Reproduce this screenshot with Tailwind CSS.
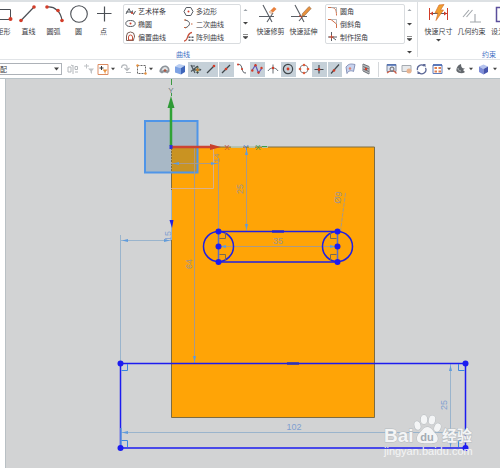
<!DOCTYPE html>
<html lang="zh-CN">
<head>
<meta charset="utf-8">
<meta name="viewport" content="width=device-width, initial-scale=1">
<title>草图</title>
<script src="https://cdn.jsdelivr.net/npm/@tailwindcss/browser@4"></script>
</head>
<body class="flex min-h-screen flex-col overflow-hidden bg-white font-['Noto_Sans_CJK_SC','Liberation_Sans',sans-serif] text-[7px] leading-[10px] text-[#3c3c44]">

<!-- Ribbon -->
<header class="flex h-[59px] w-full shrink-0 overflow-hidden border-t-2 border-[#dde1e4] whitespace-nowrap">
  <section aria-label="曲线" class="relative flex shrink-0 pt-0.5">
    <div class="-ml-[9px] flex">
      <button class="flex w-[25px] flex-col items-center"><svg class="h-[22px] w-[25px]" viewBox="0 0 25 22" fill="none"><path d="M2 5.500h17.500v10H2z" stroke="#4b4f55"/><circle cx="19.500" cy="15" r="2" fill="#d23c28"/></svg>矩形</button>
      <button class="flex w-[25px] flex-col items-center"><svg class="h-[22px] w-[25px]" viewBox="0 0 25 22" fill="none"><path d="M5 16.500 18 3" stroke="#4b4f55" stroke-width="1.200"/><circle cx="5" cy="16.500" r="1.800" fill="#d23c28"/><circle cx="18" cy="3" r="1.800" fill="#d23c28"/></svg>直线</button>
      <button class="flex w-[25px] flex-col items-center"><svg class="h-[22px] w-[25px]" viewBox="0 0 25 22" fill="none"><path d="M6 3C14 2 20 8 21 16.500" stroke="#4b4f55" stroke-width="1.200"/><circle cx="6" cy="3" r="1.800" fill="#d23c28"/><circle cx="17" cy="6.500" r="1.800" fill="#d23c28"/><circle cx="21" cy="16.500" r="1.800" fill="#d23c28"/></svg>圆弧</button>
      <button class="flex w-[25px] flex-col items-center"><svg class="h-[22px] w-[25px]" viewBox="0 0 25 22" fill="none"><circle cx="13" cy="10" r="8.300" stroke="#4b4f55" stroke-width="1.100"/></svg>圆</button>
      <button class="flex w-[25px] flex-col items-center"><svg class="h-[22px] w-[25px]" viewBox="0 0 25 22" fill="none"><path d="M13.500 2.500v15M6 9.500h14.500" stroke="#4b4f55" stroke-width="1.200"/></svg>点</button>
    </div>
    <div class="ml-[7px] flex h-10 rounded-xs border border-[#d9dcdf]">
      <div class="grid w-[116px] grid-cols-2 content-around">
        <button class="flex items-center gap-0.5 pl-px"><svg class="size-[11px]" viewBox="0 0 11 11" fill="none"><path d="M1 8 4 2.500 6 7 7.500 4.500M1 6h4M7 5l1.500 3.500L10.500 5" stroke="#555a61"/><circle cx="7" cy="7" r="1" fill="#d23c28"/></svg>艺术样条</button>
        <button class="flex items-center gap-0.5 pl-px"><svg class="size-[11px]" viewBox="0 0 11 11" fill="none"><path d="M3.200 1.500h4.600L10 5.500l-2.200 4H3.200L1 5.500z" stroke="#555a61"/><circle cx="5.500" cy="5.500" r="1" fill="#d23c28"/></svg>多边形</button>
        <button class="flex items-center gap-0.5 pl-px"><svg class="size-[11px]" viewBox="0 0 11 11" fill="none"><ellipse cx="5.500" cy="5.500" rx="4.700" ry="3" stroke="#555a61"/><circle cx="5.500" cy="5.500" r="1" fill="#d23c28"/></svg>椭圆</button>
        <button class="flex items-center gap-0.5 pl-px"><svg class="size-[11px]" viewBox="0 0 11 11" fill="none"><path d="M2 2c6 1 6 6 0 8" stroke="#555a61"/><path d="M1 2h2M1 9.500h2M8 6h1.500" stroke="#c8643c"/></svg>二次曲线</button>
        <button class="flex items-center gap-0.5 pl-px"><svg class="size-[11px]" viewBox="0 0 11 11" fill="none"><path d="M1.500 9.500V5a4 4 0 0 1 8 0c0 2-1 2-1 4.500z" stroke="#7b6058"/><path d="M3.500 9V6a2 2 0 0 1 4 0v3z" stroke="#c8503a"/></svg>偏置曲线</button>
        <button class="flex items-center gap-0.5 pl-px"><svg class="size-[11px]" viewBox="0 0 11 11" fill="none"><path d="M1 10c5 0 2-8 8-8.500" stroke="#c8503a" stroke-width="1.300"/><path d="M5.500 5.500h2v1.500h-2zM8.500 5.500h2v1.500h-2zM5.500 8.500h2V10h-2zM8.500 8.500h2V10h-2z" fill="#555a61"/></svg>阵列曲线</button>
      </div>
    </div>
    <div class="flex h-10 w-[8px] flex-col items-center justify-around">
      <button aria-label="向上滚动"><svg class="h-1 w-[5px]" viewBox="0 0 5 4"><path d="M.5 3 2.500 1l2 2z" fill="#9aa0a6"/></svg></button>
      <button aria-label="向下滚动"><svg class="h-1 w-[5px]" viewBox="0 0 5 4"><path d="M0 1h5L2.500 3.500z" fill="#444"/></svg></button>
      <button aria-label="更多曲线"><svg class="h-1.5 w-[5px]" viewBox="0 0 5 6"><path d="M0 .5h5M0 2.500h5L2.500 5z" fill="#444" stroke="#444" stroke-width=".6"/></svg></button>
    </div>
    <div class="ml-[5px] flex">
      <button class="flex w-[33px] flex-col items-center"><svg class="h-[22px] w-[25px]" viewBox="0 0 25 22" fill="none"><path d="M5 1 14 18M1 12.500h15M9 18 15 9" stroke="#5a5f66" stroke-width="1.100"/><path d="m11 8 5-5 2.500 2-5 5z" fill="#e8803c"/><path d="m11 8 1.500-1.500L15 8.500 13.500 10z" fill="#e6c9b6"/></svg>快速修剪</button>
      <button class="flex w-[33px] flex-col items-center"><svg class="h-[22px] w-[25px]" viewBox="0 0 25 22" fill="none"><path d="M4 1 13 18M0 12.500h16M8 17 13 11" stroke="#5a5f66" stroke-width="1.100"/><path d="m11.500 9.500 6.500-7 2.200 2-6.500 7-3 1z" fill="#e8913c" stroke="#8f6a4c" stroke-width=".6"/><path d="m8 11.500 3 2" stroke="#d23c28"/></svg>快速延伸</button>
    </div>
    <div class="ml-[5px] h-10 w-[80px] rounded-xs border border-[#d9dcdf]">
      <div class="grid h-full content-around">
        <button class="flex items-center gap-0.5 pl-px"><svg class="size-[11px]" viewBox="0 0 11 11" fill="none"><path d="M1 1.500h3c4 0 5.500 2 5.500 8" stroke="#d0704a"/><path d="M4 1.500h5.500V6" stroke="#a5a9ad" stroke-width=".8"/></svg>圆角</button>
        <button class="flex items-center gap-0.5 pl-px"><svg class="size-[11px]" viewBox="0 0 11 11" fill="none"><path d="M1 1.500h3L9.500 6v4" stroke="#d0704a"/><path d="M4 1.500h5.500V6" stroke="#a5a9ad" stroke-width=".8"/></svg>倒斜角</button>
        <button class="flex items-center gap-0.5 pl-px"><svg class="size-[11px]" viewBox="0 0 11 11" fill="none"><path d="M4.500 1v9M1 6h9M5 6l4 3" stroke="#5a5f66"/><path d="M2 6h5M4.500 4v4" stroke="#c8503a"/></svg>制作拐角</button>
      </div>
    </div>
    <div class="flex h-[52px] w-[9px] flex-col items-center pt-1">
      <button aria-label="向上滚动" class="flex h-[14px] items-start"><svg class="h-1 w-[5px]" viewBox="0 0 5 4"><path d="M.5 3 2.500 1l2 2z" fill="#9aa0a6"/></svg></button>
      <button aria-label="向下滚动" class="flex h-[14px] items-start"><svg class="h-1 w-[5px]" viewBox="0 0 5 4"><path d="M0 1h5L2.500 3.500z" fill="#444"/></svg></button>
      <button aria-label="更多编辑" class="flex h-[14px] items-start"><svg class="h-1.5 w-[5px]" viewBox="0 0 5 6"><path d="M0 .5h5M0 2.500h5L2.500 5z" fill="#444" stroke="#444" stroke-width=".6"/></svg></button>
      <button aria-label="曲线组选项"><svg class="h-1 w-[5px]" viewBox="0 0 5 4"><path d="M0 1h5L2.500 3.500z" fill="#444"/></svg></button>
    </div>
    <h2 class="absolute bottom-0 left-[176px] text-[#4472c4]">曲线</h2>
  </section>
  <section aria-label="约束" class="relative mb-0.5 ml-[3px] flex shrink-0 border-l border-[#dcdfe2] pt-0.5">
    <button class="ml-1 flex w-[33px] flex-col items-center"><svg class="h-[22px] w-[25px]" viewBox="0 0 25 22" fill="none"><path d="M3.500 4v12M21.500 4v12" stroke="#d23c28"/><path d="M4 9.500h17" stroke="#555a61"/><path d="m4 9.500 3-2v4zM21 9.500l-3-2v4z" fill="#d23c28"/><path d="m13 1 5-.500-3.500 5.500h3L10 16.500l2-7.500H9z" fill="#f0a030" stroke="#d8702c" stroke-width=".7"/></svg>快速尺寸<svg class="mt-0.5 h-1 w-[5px]" viewBox="0 0 5 4"><path d="M0 1h5L2.500 3.500z" fill="#444"/></svg></button>
    <button class="flex w-[33px] flex-col items-center"><svg class="h-[22px] w-[25px]" viewBox="0 0 25 22" fill="none"><path d="m4 13 6-7M7.500 13l6-7M16 10v8M11 18h11" stroke="#a0a5aa" stroke-width="1.100"/></svg>几何约束</button>
    <button class="flex w-[33px] flex-col items-start pl-[3px]"><svg class="h-[22px] w-[25px]" viewBox="0 0 25 22" fill="none"><path d="M5.500 3.500h12v14h-12z" stroke="#5b4f9c" stroke-width="1.500"/><path d="M9 2h5v3H9z" fill="#8a8fa0"/></svg>设为对称</button>
    <h2 class="absolute -bottom-0.5 left-[64px] text-[#4472c4]">约束</h2>
  </section>
</header>

<!-- Selection bar -->
<nav aria-label="选择条" class="flex h-5 w-full shrink-0 items-center overflow-hidden border-y border-t-[#e1e4e7] border-b-[#b9c3c8]">
  <div class="relative shrink-0">
    <label for="scope" class="sr-only">选择范围</label>
    <select id="scope" class="h-3 w-[62px] appearance-none border border-l-0 border-[#adb2b8] bg-white pr-3 leading-[10px]"><option>配</option></select>
    <svg class="pointer-events-none absolute top-1 right-[3px] h-1 w-[5px]" viewBox="0 0 5 4"><path d="M0 .5h5L2.500 3.500z" fill="#444"/></svg>
  </div>
  <div class="ml-[3px] flex shrink-0 items-center">
    <button aria-label="类型" class="flex w-4 justify-center"><svg class="size-3" viewBox="0 0 12 12" fill="none" stroke="#b4b8bc"><path d="M1 4h3v5H1zM6 2v9M8 3.500h2.500v3H8zM8 9h3M4 2l2 1"/></svg></button>
    <button aria-label="过滤" class="flex w-4 justify-center"><svg class="size-3" viewBox="0 0 12 12"><path d="M1 3h5M3.500 1v4.500" stroke="#c0c3c6"/><path d="M5 5.500h6L9 8v3L7.500 9.500V8z" fill="#c0c3c6"/></svg></button>
    <button aria-label="添加过滤" class="flex w-3 justify-center"><svg class="h-[11px] w-3" viewBox="0 0 12 11" fill="none"><path d="M1 .5h10v10H1z" stroke="#dc8c62"/><path d="M2.500 4h4M4.500 2v4" stroke="#333"/><path d="M5.500 5.500h5L8.500 8v2L7.500 9V8z" fill="#e8913c"/></svg></button>
    <button aria-label="过滤选项" class="flex w-2 justify-center"><svg class="h-1 w-1" viewBox="0 0 5 4"><path d="M0 .5h5L2.500 3.500z" fill="#444"/></svg></button>
    <button aria-label="重置" class="flex w-[18px] justify-center"><svg class="size-3" viewBox="0 0 12 12" fill="none" stroke="#b4b8bc" stroke-width="1.200"><path d="M1.500 5C1.500 1 7 1 7 4v3M4.500 5 7 7.500 9.500 5M6 9.500h5"/></svg></button>
    <button aria-label="矩形选择" class="flex w-3 justify-center"><svg class="h-[11px] w-[11px]" viewBox="0 0 11 11" fill="none"><path d="M1.500 1.500h8v8h-8z" stroke="#666" stroke-dasharray="2 1"/><circle cx="1.500" cy="1.500" r="1.200" fill="#e8913c"/><circle cx="9.500" cy="9.500" r="1.200" fill="#e8913c"/></svg></button>
    <button aria-label="选择方式" class="flex w-2 justify-center"><svg class="h-1 w-1" viewBox="0 0 5 4"><path d="M0 .5h5L2.500 3.500z" fill="#444"/></svg></button>
  </div>
  <div class="ml-0.5 grid h-[15px] w-[217px] shrink-0 grid-cols-14 *:flex *:items-center *:justify-center">
    <button aria-label="高亮"><svg class="h-[11px] w-[11px]" viewBox="0 0 11 11"><path d="M.5 8C0 5 3 1.500 6 1.500S11 4 10.500 7.500L8.500 9.500C7 8 4 8 3 9.500z" fill="#8d949b"/><path d="M2.500 7c.5-3 2-4 3.500-4s3 1 3 3.500C7 5.500 5 5.500 2.500 7z" fill="#dfe2e4"/><circle cx="6" cy="6.500" r="1.200" fill="#b0543c"/></svg></button>
    <button aria-label="实体"><svg class="size-3" viewBox="0 0 12 12"><path d="M1 3.500 5 1l6 1.500-4 2.500z" fill="#b8cdf2"/><path d="M1 3.500 7 5v6.500L1 9.500z" fill="#7ea3e4"/><path d="m7 5 4-2.500V9l-4 2.500z" fill="#3f66ba"/></svg></button>
    <button aria-label="捕捉点" aria-pressed="true" class="bg-[#c5d0d8]"><svg class="size-3" viewBox="0 0 12 12" fill="none"><path d="m1 2 4 8M1 8.500l6-5M1 3h4" stroke="#4d565c" stroke-width="1.200"/><path d="M7.500 2.500 9 4.500H6zM7.500 11 9 9H6zM3.500 6.800l2-1.500v3zM11.500 6.800l-2-1.500v3z" fill="#40474c"/><path d="M5.500 6.800h4M7.500 4.500V9" stroke="#4f7d34" stroke-width="1.500"/><circle cx="7.500" cy="6.800" r="1.500" fill="#c87a3c"/></svg></button>
    <button aria-label="端点" aria-pressed="true" class="mr-px bg-[#c5d0d8]"><svg class="size-3" viewBox="0 0 12 12" fill="none"><path d="m2 10 7-7" stroke="#40474c" stroke-width="1.200"/><circle cx="9" cy="3" r="1.300" fill="#d23c28"/></svg></button>
    <button aria-label="中点" aria-pressed="true" class="mr-px bg-[#c5d0d8]"><svg class="size-3" viewBox="0 0 12 12" fill="none"><path d="m2 10 8-8" stroke="#40474c" stroke-width="1.200"/><circle cx="6" cy="6" r="1.300" fill="#d23c28"/></svg></button>
    <button aria-label="控制点"><svg class="size-3" viewBox="0 0 12 12" fill="none"><path d="M2 1.500c6-1 2 9 8 8.500" stroke="#555a61"/><circle cx="2" cy="1.500" r="1" fill="#d23c28"/><circle cx="6" cy="6" r="1" fill="#d23c28"/></svg></button>
    <button aria-label="极点" aria-pressed="true" class="mr-px bg-[#c5d0d8]"><svg class="size-3" viewBox="0 0 12 12" fill="none"><path d="M1 7.500 4.500 2l3 8 3.500-5" stroke="#5f55ba" stroke-width="1.200"/><g fill="#d23c28"><circle cx="1.300" cy="7.500" r="1.200"/><circle cx="4.500" cy="2.200" r="1.200"/><circle cx="7.500" cy="9.500" r="1.200"/><circle cx="10.500" cy="5" r="1.200"/></g></svg></button>
    <button aria-label="交点"><svg class="size-3" viewBox="0 0 12 12" fill="none"><path d="M1 8c2-4 8-4 10 0M6 1.500v9" stroke="#666c72"/><circle cx="6" cy="5" r="1.200" fill="#d23c28"/></svg></button>
    <button aria-label="圆弧中心" aria-pressed="true" class="mr-px bg-[#c5d0d8]"><svg class="size-3" viewBox="0 0 12 12" fill="none"><circle cx="6" cy="6" r="4.600" stroke="#40474c" stroke-width="1.200"/><circle cx="6" cy="6" r="1.400" fill="#d23c28"/></svg></button>
    <button aria-label="象限点"><svg class="size-3" viewBox="0 0 12 12" fill="none"><circle cx="6" cy="6" r="4" stroke="#8a8f94"/><g fill="#dc6040"><circle cx="6" cy="2" r="1.300"/><circle cx="6" cy="10" r="1.300"/><circle cx="2" cy="6" r="1.300"/><circle cx="10" cy="6" r="1.300"/></g></svg></button>
    <button aria-label="现有点" aria-pressed="true" class="mr-px bg-[#c5d0d8]"><svg class="size-3" viewBox="0 0 12 12" fill="none"><path d="M6 2v8.500M1.500 6.500h9" stroke="#40474c" stroke-width="1.200"/><circle cx="6" cy="6.500" r="1.400" fill="#c03a2a"/></svg></button>
    <button aria-label="曲线上的点" aria-pressed="true" class="mr-px bg-[#c5d0d8]"><svg class="size-3" viewBox="0 0 12 12" fill="none"><path d="m2 10.500 8-9" stroke="#40474c" stroke-width="1.200"/><circle cx="5" cy="7.500" r="1.300" fill="#d23c28"/></svg></button>
    <button aria-label="面上的点"><svg class="size-3" viewBox="0 0 12 12" fill="none"><path d="M1 4c3-4 6-3 9-2.500l-1.500 7C6 7 3 8 2 10.500z" fill="#c8d3ee" stroke="#8592b8"/><circle cx="5" cy="5.500" r="1.200" fill="#dc8070"/></svg></button>
    <button aria-label="网格点"><svg class="size-3" viewBox="0 0 12 12" fill="none"><path d="m3 1 6 2.500V11L3 8zM5 2v7M7 3v7M3 3.500l6 2.500M3 6l6 2.500" stroke="#6b7076"/><circle cx="6" cy="6" r="1.200" fill="#d23c28"/></svg></button>
  </div>
  <div class="ml-1 flex h-[15px] shrink-0 items-center border-l border-[#d5d8db] pl-[5px]">
    <button aria-label="缩放窗口" class="flex w-[15px] justify-center"><svg class="h-3 w-[11px]" viewBox="0 0 11 12" fill="none"><path d="M1 1.500h9v7H1z" fill="#dfe5f2" stroke="#7e889a"/><path d="M1 2h9" stroke="#4a6cb4" stroke-width="1.500"/><circle cx="6" cy="6" r="2" stroke="#666"/><path d="m1 10 3-2M7.500 7.500l3 3" stroke="#d0604a" stroke-width="1.300"/></svg></button>
    <button aria-label="适合窗口" class="flex w-[15px] justify-center"><svg class="h-3 w-[11px]" viewBox="0 0 11 12" fill="none"><path d="M1 2.500h9v6H1z" fill="#e8eaec" stroke="#a5aab0"/><circle cx="8" cy="8" r="2.500" fill="#e8b490"/></svg></button>
    <button aria-label="旋转" class="flex w-[15px] justify-center"><svg class="h-3 w-[11px]" viewBox="0 0 11 12" fill="none"><path d="M1.500 7A4 4 0 0 1 8 3M9.500 5A4 4 0 0 1 3 9.500" stroke="#5b6796" stroke-width="1.300"/><path d="M6.500 1h3v3.500zM4.500 11H1.500V7.500z" fill="#5b6796"/></svg></button>
    <button aria-label="窗口布局" class="flex w-4 justify-center"><svg class="h-3 w-[11px]" viewBox="0 0 11 12" fill="none"><path d="M1 2h9v8.500H1z" fill="#fff" stroke="#5f7dbc"/><path d="M1 2h9" stroke="#3f62ae" stroke-width="1.500"/><path d="M2.500 4h2.500v2H2.500zM6.500 4H9v2H6.500zM2.500 7.500h2.500v2H2.500zM6.500 7.500H9v2H6.500z" fill="#e08050"/></svg></button>
    <button aria-label="布局选项" class="flex w-2 justify-center"><svg class="h-1 w-1" viewBox="0 0 5 4"><path d="M0 .5h5L2.500 3.500z" fill="#444"/></svg></button>
    <button aria-label="渲染样式" class="flex w-[14px] justify-center"><svg class="h-3 w-[11px]" viewBox="0 0 11 12"><path d="M6 1C3 2 1 5 1.500 8c2 2.500 6 3 8.500 1l-2-2 2-1.500C8 6 6 5 6 1z" fill="#62676c"/><path d="M3 5c0 2 1 3 3 3" fill="none" stroke="#b5babf"/></svg></button>
    <button aria-label="样式选项" class="flex w-2 justify-center"><svg class="h-1 w-1" viewBox="0 0 5 4"><path d="M0 .5h5L2.500 3.500z" fill="#444"/></svg></button>
    <button aria-label="视图方向" class="flex w-4 justify-center"><svg class="h-3 w-[11px]" viewBox="0 0 11 12"><path d="m1 3.500 4.500-2 4.500 2L5.500 6z" fill="#b5c3ee"/><path d="M1 3.500 5.500 6v5.500L1 9z" fill="#7c8cd8"/><path d="M10 3.500 5.500 6v5.500L10 9z" fill="#4655ac"/></svg></button>
    <button aria-label="方向选项" class="flex w-2 justify-center"><svg class="h-1 w-1" viewBox="0 0 5 4"><path d="M0 .5h5L2.500 3.500z" fill="#444"/></svg></button>
  </div>
</nav>

<!-- Sketch canvas -->
<main class="flex grow bg-[#d2d3d4]">
  <div class="w-[6px] shrink-0 border-r border-[#b9c0c4] bg-white"></div>
  <svg class="min-h-[389px] min-w-0 grow font-['Liberation_Sans_Narrow','Liberation_Sans',sans-serif] text-[9px]" role="img" aria-label="草图视图" fill="none">
    <g transform="translate(-6 -79)">
      <path d="M171.500 147h203v270.500h-203z" fill="#ffa406" stroke="#7d6c42"/>
      <path d="M145 121h52.500v51.500H145z" fill="#a8b8c6"/>
      <path d="M171.500 148h26v24.500h-26z" fill="#c99322"/>
      <path d="M171.500 148v25" stroke="#7d6c42" stroke-dasharray="2 1"/>
      <path d="M145 121h52.500v51.500H145z" stroke="#4f95e8" stroke-width="2"/>

      <!-- dimension and extension lines -->
      <g stroke="#aa9a86">
        <path d="M194.500 148v215M218.500 158v74M246.500 148v83M171 163.500h48M222 246.500h112"/>
        <path d="M345.500 193l-5 38" stroke-dasharray="4 1"/>
        <path d="M171 188.500h42.500V148" stroke="#d9b08c"/>
      </g>
      <g stroke="#9ab4cc">
        <path d="M120.500 235v128M121 240.500h50M121 432.500h345M450.500 364v84M171.500 190v50"/>
      </g>
      <g fill="#5f9bdc">
        <path d="m122 240.500 6-1.500v3zM170 240.500l-6-1.500v3zM122 432.500l6-1.500v3zM464 432.500l-6-1.500v3zM450.500 365l1.500 6h-3zM450.500 447l1.500-6h-3zM194.500 362l1.500-6h-3zM246.500 149l1.500 6h-3zM246.500 230l1.500-6h-3zM173 163.500l6-1.500v3zM217 163.500l-6-1.500v3zM220 246.500l6-1.500v3zM336 246.500l-6-1.500v3z"/>
      </g>

      <!-- coordinate system -->
      <path d="M171.500 79v6M171.500 93v3" stroke="#3c9a40"/>
      <path d="M171 146v-41" stroke="#2fa336" stroke-width="2.500"/>
      <path d="m171 96 3.500 12h-7z" fill="#2f9a36"/>
      <path d="M172 147h40" stroke="#cc4433" stroke-width="2.500"/>
      <path d="m221 147-11-3v6z" fill="#c8402c"/>
      <path d="M169.500 145h3v4h-3z" fill="#2a35d8"/>
      <path d="m169.500 220 4 0-1.500 8z" fill="#2020e0"/>
      <path d="M231 147h12M249 147h6M262 147h6" stroke="#b9cfc4" stroke-width="1.500"/>
      <path d="M262 146.500h5" stroke="#3aa048"/>
      <g text-anchor="middle" class="text-[8px]">
        <text x="171" y="93" fill="#6f7a80">Y</text>
        <text x="227" y="150" fill="#c8503c">X</text>
        <text x="246" y="150" fill="#4f80cc">Y</text>
        <text x="258" y="150" fill="#3aa048">X</text>
      </g>

      <!-- bottom rectangle -->
      <path d="M120.500 363.500h345V448h-345z" stroke="#1c1cf0" stroke-width="1.500"/>
      <path d="M121 428v18" stroke="#5f9bdc" stroke-width="1.500"/>
      <g stroke="#3a86e0"><path d="M127.500 364v6.500h-6M127.500 447v-6.500h-6M458.500 364v6.500h6M458.500 447v-6.500h6"/></g>
      <path d="M287 363.500h12M272 231.500h12" stroke="#2c35b8" stroke-width="2.500"/>

      <!-- slot -->
      <g stroke="#2020e4" stroke-width="1.500">
        <circle cx="218.500" cy="246.500" r="15"/><circle cx="337.500" cy="246.500" r="15"/>
        <path d="M218.500 231.500h119M218.500 262h119"/>
        <path d="M218.500 231v31M337.500 231v31" stroke="#5a6cc8"/>
      </g>
      <path d="M225.500 232v6.500h-6M225.500 261v-6.500h-6M330.500 232v6.500h6M330.500 261v-6.500h6" stroke="#7a6a50"/>
      <g fill="#1c1cf0">
        <circle cx="218.500" cy="231.500" r="3"/><circle cx="218.500" cy="246.500" r="3"/><circle cx="218.500" cy="262" r="3"/>
        <circle cx="337.500" cy="231.500" r="3"/><circle cx="337.500" cy="246.500" r="3"/><circle cx="337.500" cy="262" r="3"/>
        <circle cx="120.500" cy="363.500" r="3"/><circle cx="465.500" cy="363.500" r="3"/><circle cx="120.500" cy="448" r="3"/><circle cx="465.500" cy="448" r="3"/>
      </g>

      <g text-anchor="middle" fill="#a0948a">
        <text x="278" y="244">35</text>
        <text transform="translate(243 189) rotate(-90)">25</text>
        <text transform="translate(192 264) rotate(-90)">64</text>
        <text transform="translate(219 158) rotate(-90)" class="text-[8px]">14</text>
        <text transform="translate(341 198) rotate(-82)">Ø9</text>
      </g>
      <g text-anchor="middle" fill="#7f9fd0">
        <text x="294" y="430">102</text>
        <text transform="translate(171 236) rotate(-90)">15</text>
        <text transform="translate(447 405) rotate(-90)">25</text>
      </g>

      <!-- watermark -->
      <g fill="#f4f5f6" stroke="#b6bcc0" stroke-width="1" paint-order="stroke" class="font-['Liberation_Sans','Noto_Sans_CJK_SC',sans-serif]">
        <text x="384" y="442" class="text-[19px] font-bold">Bai</text>
        <g>
          <ellipse cx="417.500" cy="425.500" rx="3" ry="4.300" transform="rotate(-15 417.500 425.500)"/>
          <ellipse cx="424" cy="419.500" rx="3.200" ry="4.500"/>
          <ellipse cx="432" cy="420" rx="3.200" ry="4.500" transform="rotate(10 432 420)"/>
          <ellipse cx="437.500" cy="427.500" rx="3.200" ry="4.300" transform="rotate(20 437.500 427.500)"/>
          <path d="M427.500 427c4 0 5 4 8 6.500 3 3 3.500 9-1.500 9.500-3 .3-9 .3-12.500 0-6-.5-5.500-7-2-10 3-2.500 4-6 8-6z"/>
        </g>
        <text x="427" y="441" text-anchor="middle" fill="#a3abb2" stroke="none" class="text-[11px] font-bold">du</text>
        <text x="442" y="441" class="text-[15px] font-bold">经验</text>
        <text x="384" y="455" stroke="none" class="text-[11px]">jingyan.baidu.com</text>
      </g>
    </g>
  </svg>
</main>
</body>
</html>
